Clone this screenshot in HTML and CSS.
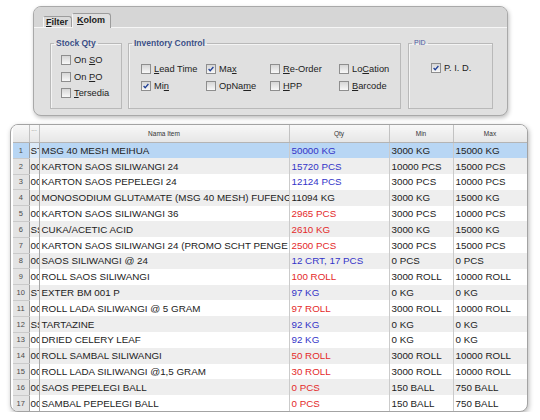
FILE: index.html
```html
<!DOCTYPE html>
<html lang="id">

<head>
    <meta charset="UTF-8">
    <title>Stock Qty</title>
    <link rel="stylesheet" href="styles.css">
</head>

<body>
    <div class="panel">
        <div class="tabs">
            <span class="tab"><u>F</u>ilter</span>
            <span class="tab active"><u>K</u>olom</span>
        </div>
        <div class="page">
            <fieldset class="group stock">
                <legend>Stock Qty</legend>
                <div class="group-body">
                    <label class="chk"><span class="box"></span><span>On <u>S</u>O</span></label>
                    <label class="chk"><span class="box"></span><span>On <u>P</u>O</span></label>
                    <label class="chk"><span class="box"></span><span><u>T</u>ersedia</span></label>
                </div>
            </fieldset>
            <fieldset class="group inventory">
                <legend>Inventory Control</legend>
                <div class="group-body chk-grid">
                    <label class="chk"><span class="box"></span><span><u>L</u>ead Time</span></label>
                    <label class="chk"><span class="box checked"><svg viewBox="0 0 10 10"><path d="M2 5l2 2.2L8 2.5" /></svg></span><span>Ma<u>x</u></span></label>
                    <label class="chk"><span class="box"></span><span><u>R</u>e-Order</span></label>
                    <label class="chk"><span class="box"></span><span>Lo<u>C</u>ation</span></label>
                    <label class="chk"><span class="box checked"><svg viewBox="0 0 10 10"><path d="M2 5l2 2.2L8 2.5" /></svg></span><span>Mi<u>n</u></span></label>
                    <label class="chk"><span class="box"></span><span>OpNa<u>m</u>e</span></label>
                    <label class="chk"><span class="box"></span><span><u>H</u>PP</span></label>
                    <label class="chk"><span class="box"></span><span><u>B</u>arcode</span></label>
                </div>
            </fieldset>
            <fieldset class="group pid">
                <legend>PID</legend>
                <div class="group-body">
                    <label class="chk"><span class="box checked"><svg viewBox="0 0 10 10"><path d="M2 5l2 2.2L8 2.5" /></svg></span><span>P. I. D.</span></label>
                </div>
            </fieldset>
        </div>
    </div>

    <div class="grid-box">
        <table class="grid">
            <colgroup>
                <col class="c-no">
                <col class="c-code">
                <col class="c-name">
                <col class="c-qty">
                <col class="c-min">
                <col class="c-max">
            </colgroup>
            <thead>
                <tr>
                    <th></th>
                    <th class="dots">...</th>
                    <th>Nama Item</th>
                    <th>Qty</th>
                    <th>Min</th>
                    <th>Max</th>
                </tr>
            </thead>
            <tbody>
                <tr class="selected"><td class="no">1</td><td>ST</td><td>MSG 40 MESH MEIHUA</td><td class="blue">50000 KG</td><td>3000 KG</td><td>15000 KG</td></tr>
                <tr><td class="no">2</td><td>00</td><td>KARTON SAOS SILIWANGI 24</td><td class="blue">15720 PCS</td><td>10000 PCS</td><td>15000 PCS</td></tr>
                <tr><td class="no">3</td><td>00</td><td>KARTON SAOS PEPELEGI 24</td><td class="blue">12124 PCS</td><td>3000 PCS</td><td>10000 PCS</td></tr>
                <tr><td class="no">4</td><td>00</td><td>MONOSODIUM GLUTAMATE (MSG 40 MESH) FUFENG</td><td>11094 KG</td><td>3000 KG</td><td>15000 KG</td></tr>
                <tr><td class="no">5</td><td>00</td><td>KARTON SAOS SILIWANGI 36</td><td class="red">2965 PCS</td><td>3000 PCS</td><td>10000 PCS</td></tr>
                <tr><td class="no">6</td><td>SS</td><td>CUKA/ACETIC ACID</td><td class="red">2610 KG</td><td>3000 KG</td><td>15000 KG</td></tr>
                <tr><td class="no">7</td><td>00</td><td>KARTON SAOS SILIWANGI 24 (PROMO SCHT PENGE</td><td class="red">2500 PCS</td><td>3000 PCS</td><td>15000 PCS</td></tr>
                <tr><td class="no">8</td><td>00</td><td>SAOS SILIWANGI @ 24</td><td class="blue">12 CRT, 17 PCS</td><td>0 PCS</td><td>0 PCS</td></tr>
                <tr><td class="no">9</td><td>00</td><td>ROLL SAOS SILIWANGI</td><td class="red">100 ROLL</td><td>3000 ROLL</td><td>10000 ROLL</td></tr>
                <tr><td class="no">10</td><td>ST</td><td>EXTER BM 001 P</td><td class="blue">97 KG</td><td>0 KG</td><td>0 KG</td></tr>
                <tr><td class="no">11</td><td>00</td><td>ROLL LADA SILIWANGI @ 5 GRAM</td><td class="red">97 ROLL</td><td>3000 ROLL</td><td>10000 ROLL</td></tr>
                <tr><td class="no">12</td><td>SS</td><td>TARTAZINE</td><td class="blue">92 KG</td><td>0 KG</td><td>0 KG</td></tr>
                <tr><td class="no">13</td><td>00</td><td>DRIED CELERY LEAF</td><td class="blue">92 KG</td><td>0 KG</td><td>0 KG</td></tr>
                <tr><td class="no">14</td><td>00</td><td>ROLL SAMBAL SILIWANGI</td><td class="red">50 ROLL</td><td>3000 ROLL</td><td>10000 ROLL</td></tr>
                <tr><td class="no">15</td><td>00</td><td>ROLL LADA SILIWANGI @1,5 GRAM</td><td class="red">30 ROLL</td><td>3000 ROLL</td><td>10000 ROLL</td></tr>
                <tr><td class="no">16</td><td>00</td><td>SAOS PEPELEGI BALL</td><td class="red">0 PCS</td><td>150 BALL</td><td>750 BALL</td></tr>
                <tr><td class="no">17</td><td>00</td><td>SAMBAL PEPELEGI BALL</td><td class="red">0 PCS</td><td>150 BALL</td><td>750 BALL</td></tr>
            </tbody>
        </table>
    </div>
</body>

</html>
```

FILE: styles.css
```css
body {
    margin: 0;
    background-color: #ffffff;
    font-family: 'Liberation Sans', Arial, sans-serif;
    color: #222222;
}

u {
    text-decoration-thickness: 1px;
    text-underline-offset: 1px;
}

/* Panel atas dengan tab */
.panel {
    margin: 6px 0 0 33px;
    width: 475px;
    height: 110px;
    box-sizing: border-box;
    border: 1px solid #a9a9a9;
    border-radius: 8px;
    background-color: #e0e0e0;
    box-shadow: 1px 2px 4px rgba(0, 0, 0, 0.25);
    overflow: hidden;
}

.tabs {
    display: flex;
    align-items: flex-end;
    height: 20px;
    padding-left: 9px;
    background-color: #d6d6d6;
    border-bottom: 1px solid #f6f6f6;
}

.tab {
    height: 10px;
    padding: 0 3px 0 2px;
    border: 1px solid #9c9c9c;
    border-bottom: none;
    border-left-color: #f4f4f4;
    border-radius: 2px 3px 0 0;
    background-color: #dadada;
    font-size: 9px;
    font-weight: bold;
    line-height: 11px;
    color: #1c1c1c;
}

.tab.active {
    position: relative;
    height: 14px;
    margin-bottom: -1px;
    padding: 0 5px 0 4px;
    background-color: #e0e0e0;
    line-height: 13px;
}

.page {
    display: flex;
    gap: 6px;
    padding: 10px 0 0 16px;
}

.group {
    box-sizing: border-box;
    height: 71px;
    margin: 0;
    padding: 0;
    border: 1px solid #b9b9b9;
    box-shadow: inset 1px 1px 0 #f4f4f4;
}

.group legend {
    margin-left: 3px;
    padding: 0 2px;
    font-size: 8.5px;
    font-weight: bold;
    line-height: 10px;
    color: #3b4f86;
}

.stock {
    width: 72px;
}

.stock .group-body {
    padding: 4px 0 0 10px;
}

.inventory {
    width: 273px;
}

.inventory .group-body {
    padding: 12px 0 0 12px;
}

.pid {
    width: 85px;
    margin-left: 1px;
}

.pid .group-body {
    padding: 12px 0 0 22px;
}

.pid legend {
    font-size: 7px;
    font-weight: normal;
    color: #4a5aa0;
}

.chk-grid {
    display: grid;
    grid-template-columns: 65px 64px 69px auto;
}

.chk {
    display: flex;
    align-items: center;
    gap: 3px;
    height: 16.5px;
    font-size: 9.3px;
    color: #222222;
    white-space: nowrap;
}

.inventory .chk {
    height: 17px;
}

.box {
    flex: none;
    width: 10px;
    height: 10px;
    box-sizing: border-box;
    border: 1px solid #8e8e8e;
    background: linear-gradient(#d6d6d6, #f8f8f8);
}

.box svg {
    display: block;
    width: 8px;
    height: 8px;
    fill: none;
    stroke: #1f3f95;
    stroke-width: 1.6;
}

/* Tabel data */
.grid-box {
    margin: 8px 0 0 10px;
    width: 518px;
    height: 288px;
    box-sizing: border-box;
    padding-left: 2px;
    border: 1px solid #a3a3a3;
    border-radius: 8px;
    background-color: #ffffff;
    box-shadow: 1px 2px 5px rgba(0, 0, 0, 0.28);
    overflow: hidden;
}

.grid {
    width: 514px;
    table-layout: fixed;
    border-collapse: collapse;
}

.c-no { width: 16px; }
.c-code { width: 10px; }
.c-name { width: 250px; }
.c-qty { width: 100px; }
.c-min { width: 64px; }
.c-max { width: 74px; }

.grid th {
    height: 17px;
    padding: 0;
    background: linear-gradient(#f8f8f8, #e6e6e6);
    border-right: 1px solid #c2c2c2;
    border-bottom: 1px solid #b4b4b4;
    font-size: 6.5px;
    font-weight: normal;
    color: #333333;
}

.grid th.dots {
    vertical-align: top;
    color: #888888;
}

.grid tbody tr {
    height: 15.8px;
}

.grid tbody tr:nth-child(even) td {
    background-color: #eeeeee;
}

.grid td {
    padding: 0 0 0 2px;
    border-right: 1px solid #cbcbcb;
    font-size: 9.8px;
    line-height: 11px;
    white-space: nowrap;
    overflow: hidden;
    color: #222222;
}

.grid td:nth-child(2) {
    padding-left: 1px;
    border-right-color: #a8a8a8;
}

.grid td.no,
.grid tbody tr:nth-child(even) td.no {
    padding: 0;
    background-color: #e4e4e4;
    border-right: 1px solid #a0a0a0;
    border-bottom: 1px solid #cacaca;
    text-align: center;
    font-size: 7.5px;
    color: #4a4a4a;
}

.grid tr.selected td {
    background-color: #b8d6f4;
}

.grid tr.selected td:nth-child(2) {
    background-color: #dbe9f7;
}

.grid td.blue {
    color: #3434c8;
}

.grid td.red {
    color: #e42a2a;
}
```
